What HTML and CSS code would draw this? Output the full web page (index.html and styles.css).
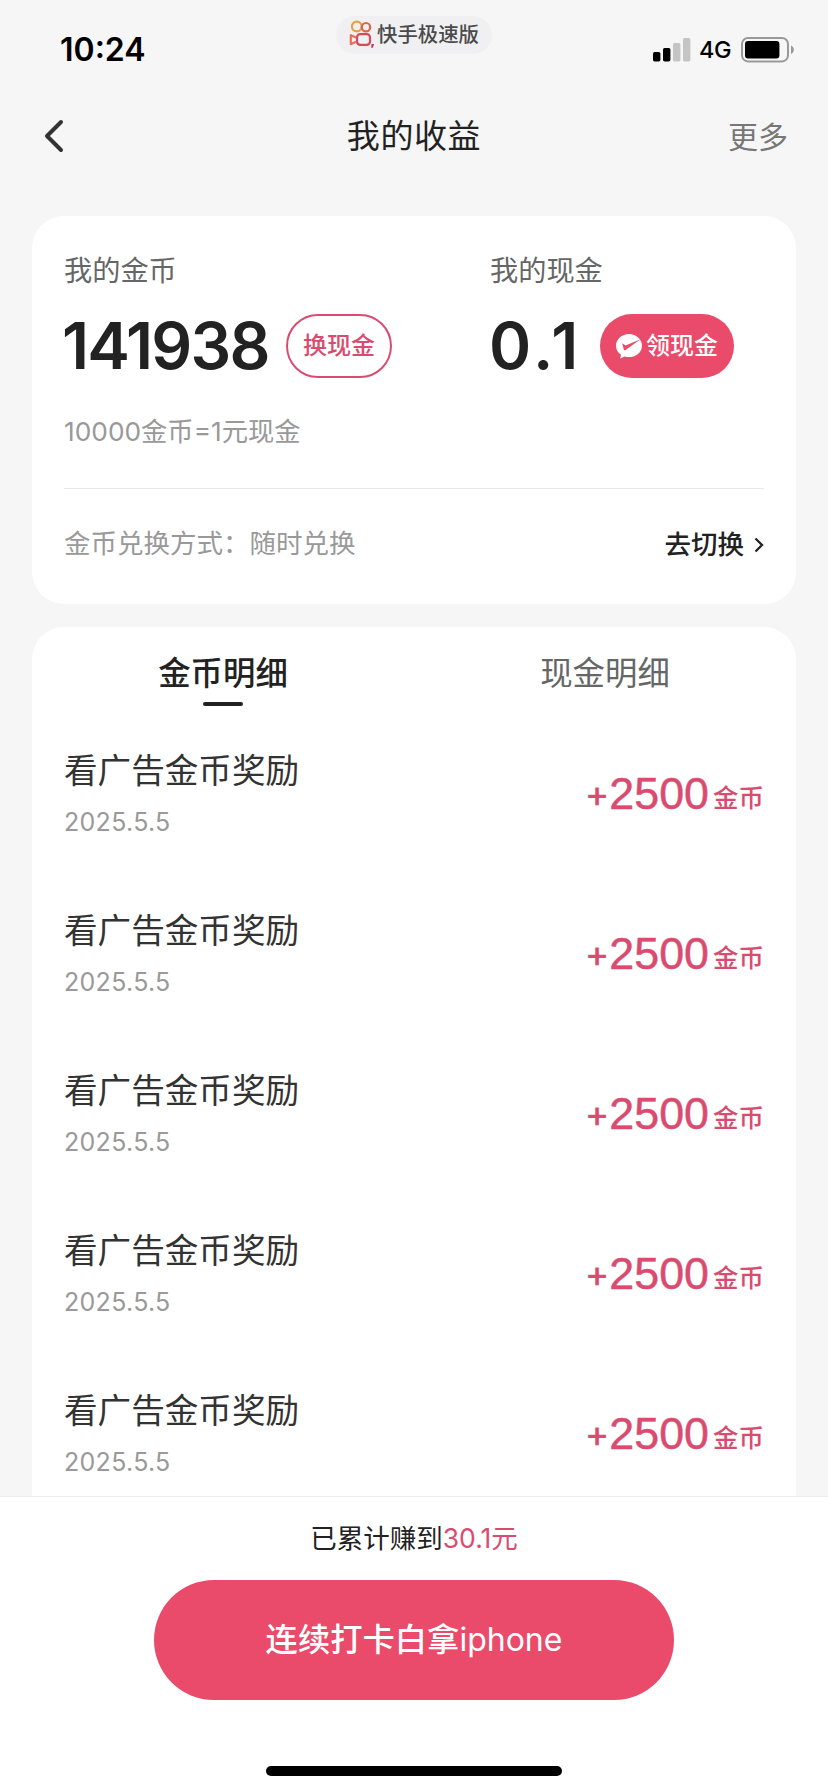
FILE: index.html
```html
<!DOCTYPE html>
<html lang="zh-CN">
<head>
<meta charset="utf-8">
<title>我的收益</title>
<link rel="stylesheet" href="styles.css">
</head>
<body>
<div class="screen">
  <header class="status">
    <span class="time">10:24</span>
    <span class="app-pill">
      <svg class="logo" width="26" height="28" viewBox="0 0 26 28" fill="none" stroke-width="2.2">
        <circle cx="7.8" cy="6.500" r="4.900" stroke="#e9a044"/>
        <circle cx="17" cy="7.200" r="4.200" stroke="#e2604e"/>
        <rect x="8" y="14.200" width="13" height="10.600" rx="3.200" stroke="#d44b5c"/>
        <path d="M7 17.500 1.800 15.200v9L7 21.800" stroke="#e8705a" stroke-linejoin="round"/>
        <path d="M22.500 24h2.600l-1.200 3.800h-1.700z" fill="#c93460"/>
      </svg>
      <span>快手极速版</span>
    </span>
    <span class="signals">
      <svg width="38" height="24" viewBox="0 0 38 24"><rect x="0" y="14" width="7.4" height="9.4" rx="1.6"/><rect x="10" y="10" width="7.4" height="13.4" rx="1.6"/><rect x="20" y="5" width="7.4" height="18.4" rx="1.6" fill="#c4c4c4"/><rect x="30" y="0" width="7.4" height="23.4" rx="1.6" fill="#c4c4c4"/></svg>
      <span class="net">4G</span>
      <svg width="54" height="26" viewBox="0 0 54 26"><rect x="1" y="1" width="46" height="23.4" rx="6" fill="none" stroke="#999" stroke-width="2"/><rect x="4" y="4" width="34.4" height="17.4" rx="3"/><path d="M50 8.500c1.800 .7 2.800 2.300 2.800 4.200s-1 3.500-2.800 4.200z" fill="#999"/></svg>
    </span>
  </header>

  <nav class="nav">
    <svg class="back" width="20" height="34" viewBox="0 0 20 34" fill="none" stroke="#333" stroke-width="4" stroke-linecap="round" stroke-linejoin="round"><path d="M17 3 3 17l14 14"/></svg>
    <h1 class="title">我的收益</h1>
    <span class="more">更多</span>
  </nav>

  <main class="main">
    <section class="card wallet">
      <div class="balances">
        <div class="balance">
          <div class="label">我的金币</div>
          <div class="value-row"><span class="value coins">141938</span><span class="btn outline">换现金</span></div>
        </div>
        <div class="balance">
          <div class="label">我的现金</div>
          <div class="value-row"><span class="value cash">0.1</span><span class="btn solid">
            <svg width="26" height="25" viewBox="0 0 26 25"><path fill="#fff" d="M13 0C5.800 0 0 5.200 0 11.700c0 3.800 1.900 7 5 9.100L4.200 24.600 8.800 22.500c1.300.4 2.700.6 4.200.6 7.200 0 13-5 13-11.400S20.200 0 13 0z"/><path fill="#ea4b6a" d="M6.200 9.200 9.600 11.500 24.500 5.200 9.600 16c-.9.500-1.600.2-1.900-.7z"/></svg>
            <span>领现金</span></span></div>
        </div>
      </div>
      <div class="rate">10000金币=1元现金</div>
      <div class="exchange">
        <span class="mode">金币兑换方式：随时兑换</span>
        <span class="switch">去切换<svg width="10" height="16" viewBox="0 0 10 16" fill="none" stroke="#222" stroke-width="2.300"><path d="M1.500 1.500 8 8l-6.500 6.500"/></svg></span>
      </div>
    </section>

    <section class="card details">
      <div class="tabs"><span class="tab active">金币明细</span><span class="tab">现金明细</span></div>
      <ul class="list">
        <li class="item"><div><div class="name">看广告金币奖励</div><div class="date">2025.5.5</div></div><div class="amount"><span class="plus">+</span><span class="num">2500</span><span class="unit">金币</span></div></li>
        <li class="item"><div><div class="name">看广告金币奖励</div><div class="date">2025.5.5</div></div><div class="amount"><span class="plus">+</span><span class="num">2500</span><span class="unit">金币</span></div></li>
        <li class="item"><div><div class="name">看广告金币奖励</div><div class="date">2025.5.5</div></div><div class="amount"><span class="plus">+</span><span class="num">2500</span><span class="unit">金币</span></div></li>
        <li class="item"><div><div class="name">看广告金币奖励</div><div class="date">2025.5.5</div></div><div class="amount"><span class="plus">+</span><span class="num">2500</span><span class="unit">金币</span></div></li>
        <li class="item"><div><div class="name">看广告金币奖励</div><div class="date">2025.5.5</div></div><div class="amount"><span class="plus">+</span><span class="num">2500</span><span class="unit">金币</span></div></li>
      </ul>
    </section>
  </main>

  <footer class="footer">
    <div class="total">已累计赚到<span class="earned">30.1元</span></div>
    <div class="cta"><span>连续打卡白拿<span class="latin">iphone</span></span></div>
    <div class="home"></div>
  </footer>
</div>
</body>
</html>
```
FILE: styles.css
```css
* { box-sizing: border-box; margin: 0; padding: 0; }
body { background: #f6f6f6; font-family: Inter, "Noto Sans CJK SC", sans-serif; color: #222; }
.screen { width: 828px; height: 1792px; display: flex; flex-direction: column; overflow: hidden; white-space: nowrap; }
svg { display: block; flex: none; }

.status { height: 92px; flex: none; display: grid; grid-template-columns: 1fr auto 1fr; align-items: start; }
.time { padding: 30px 0 0 60px; font-size: 32px; line-height: 40px; font-weight: 600; color: #000; }
.app-pill { margin-top: 16px; width: 156px; height: 38px; border-radius: 19px; background: #f0f0f2; display: flex; align-items: center; justify-content: center; gap: 2px; font-size: 20.4px; line-height: 34px; font-weight: 500; color: #4a4a4a; }
.logo { margin-bottom: 2px; }
.signals { padding: 37px 33px 0 0; display: flex; justify-content: flex-end; align-items: center; color: #000; }
.net { margin: 0 10px 0 8px; font-size: 23.500px; line-height: 26px; font-weight: 500; letter-spacing: -.5px; }

.nav { height: 88px; flex: none; padding: 0 42px 0 42px; display: grid; grid-template-columns: 1fr auto 1fr; align-items: center; }
.back { margin-left: 2px; }
.title { font-size: 33px; line-height: 48px; font-weight: 400; letter-spacing: .6px; }
.more { justify-self: end; margin-right: -2px; padding-bottom: 3px; font-size: 30px; color: #777; }

.main { flex: 1; min-height: 0; padding: 36px 32px 0; overflow: hidden; }
.card { background: #fff; border-radius: 32px; }
.wallet { height: 388px; padding: 35px 32px 0; }
.balances { display: grid; grid-template-columns: 426px 1fr; }
.label { font-size: 28.200px; line-height: 40px; color: #666; }
.value-row { margin-top: 23px; height: 64px; display: flex; align-items: center; }
.value { font-size: 64px; line-height: 64px; font-weight: 600; }
.coins { width: 224px; margin-left: -2px; letter-spacing: -1.800px; }
.cash { width: 111px; margin-left: -1px; letter-spacing: 3.500px; }
.btn { height: 64px; border-radius: 32px; display: flex; align-items: center; justify-content: center; font-size: 24px; line-height: 36px; font-weight: 500; }
.btn svg { margin-top: 1px; }
.outline { width: 106px; padding-bottom: 1px; border: 2px solid #d94c70; color: #d94c70; }
.solid { width: 134px; padding-bottom: 1px; background: #ea4b6a; color: #fff; gap: 4px; }
.rate { margin-top: 35px; font-size: 26.300px; line-height: 38px; color: #999; }
.exchange { margin-top: 37px; border-top: 1px solid #e8e8e8; height: 111px; display: flex; align-items: center; justify-content: space-between; font-size: 26.500px; line-height: 38px; }
.mode { margin-top: -2px; color: #999; }
.switch { margin-top: -1px; display: flex; align-items: center; gap: 10px; font-weight: 500; color: #222; }
.switch svg { margin-top: 3px; }

.details { margin-top: 23px; height: 900px; }
.tabs { height: 95px; display: grid; grid-template-columns: 1fr 1fr; justify-items: center; padding-top: 23px; }
.tab { font-size: 32.400px; line-height: 48px; color: #666; }
.active { font-weight: 500; color: #222; }
.active::after { content: ""; display: block; width: 40px; height: 4px; margin: 4px auto 0; border-radius: 2px; background: #222; }
.list { list-style: none; padding: 0 32px; }
.item { height: 160px; padding-top: 25px; display: flex; justify-content: space-between; align-items: flex-start; }
.name { font-size: 33.600px; line-height: 48px; color: #333; }
.date { margin-top: 10px; font-size: 25px; line-height: 34px; color: #999; letter-spacing: .3px; }
.amount { margin-top: 21px; display: flex; align-items: baseline; line-height: 50px; color: #d94c70; }
.plus { font-size: 37px; font-weight: 500; margin-bottom: 2px; transform: translateY(-2px); }
.num { font-family: "Liberation Sans", sans-serif; font-size: 44.800px; -webkit-text-stroke: .5px #d94c70; }
.unit { margin-left: 4px; font-size: 25.500px; font-weight: 500; transform: translateY(-2px); }

.footer { height: 296px; flex: none; background: #fff; border-top: 1px solid #eee; display: flex; flex-direction: column; align-items: center; }
.total { margin-top: 22px; font-size: 26.500px; line-height: 38px; }
.earned { color: #d94c70; }
.cta { margin-top: 23px; padding-bottom: 1px; width: 520px; height: 120px; border-radius: 60px; background: #ea4b6a; color: #fff; display: flex; align-items: center; justify-content: center; font-size: 32.300px; line-height: 46px; font-weight: 500; }
.latin { font-size: 32px; font-weight: 400; }
.home { margin-top: 66px; width: 296px; height: 10px; border-radius: 5px; background: #000; }
```
